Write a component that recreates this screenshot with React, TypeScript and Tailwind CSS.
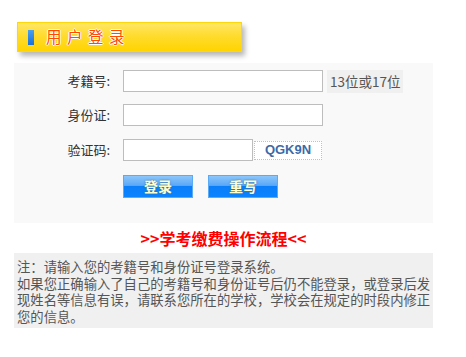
import React from "react";

const cjk = { fontFamily: '"Noto Sans CJK SC", "Liberation Sans", sans-serif' };

function Btn({ label }: { label: string }) {
  return (
    <button
      className="w-[70px] h-[23px] border border-[#5aaaf5] flex items-center justify-center text-[14px] font-bold text-[#ffffc8] bg-[linear-gradient(to_bottom,#8cc6fb_0%,#5aa8f8_45%,#0a7ef8_50%,#0a84ff_100%)] [text-shadow:0_0_2px_#3a6aa0]"
      style={cjk}
    >
      {label}
    </button>
  );
}

export default function App() {
  return (
    <div className="w-[466px] h-[357px] bg-white text-[13px] text-[#333] relative" style={cjk}>
      <div className="pt-[22px] pl-[17px]">
        <div className="w-[225px] h-[30px] border border-[#ffd60a] bg-[linear-gradient(to_bottom,#ffe667_0%,#ffdc2e_45%,#ffd400_100%)] shadow-[3px_4px_5px_rgba(0,0,0,0.28)] flex items-center">
          <div className="ml-[10px] w-[6px] h-[15px] bg-[linear-gradient(to_bottom,#4aa0f0,#1a70d8)]" />
          <span className="ml-[12px] text-[15.5px] tracking-[5.5px] text-[#ff4a00] leading-none [text-shadow:1px_0_0_#fff,-1px_0_0_#fff,0_1px_0_#fff,0_-1px_0_#fff]">
            用户登录
          </span>
        </div>
      </div>

      <div className="ml-[14px] mt-[11px] w-[419px] h-[160px] bg-[#f9f9f9] pt-[7px]">
        <div className="flex items-center h-[22px]">
          <div className="w-[96px] text-right">考籍号:</div>
          <input className="ml-[13px] w-[200px] h-[22px] border border-[#bdbdbd] bg-white outline-none" />
          <div className="ml-[4px] h-[23px] px-[3px] bg-[#f0f0f0] text-[#555] flex items-center text-[13.5px]">13位或17位</div>
        </div>
        <div className="flex items-center h-[22px] mt-[12px]">
          <div className="w-[96px] text-right">身份证:</div>
          <input className="ml-[13px] w-[200px] h-[22px] border border-[#bdbdbd] bg-white outline-none" />
        </div>
        <div className="flex items-center h-[22px] mt-[13px]">
          <div className="w-[96px] text-right">验证码:</div>
          <input className="ml-[13px] w-[130px] h-[22px] border border-[#bdbdbd] bg-white outline-none" />
          <div
            className="ml-[1px] w-[68px] h-[19px] border border-dotted border-[#a8c8e0] bg-white flex items-center justify-center text-[13px] font-bold text-[#3c6aa8]"
            style={{ fontFamily: '"Liberation Sans", Arial, sans-serif' }}
          >
            QGK9N
          </div>
        </div>
        <div className="flex items-center mt-[14px] ml-[109px] gap-[15px]">
          <Btn label="登录" />
          <Btn label="重写" />
        </div>
      </div>

      <div className="w-[419px] ml-[14px] h-[30px] flex items-center justify-center text-[16px] font-bold text-[#ff0000] pb-[1px]">
        &gt;&gt;学考缴费操作流程&lt;&lt;
      </div>

      <div className="ml-[14px] w-[419px] h-[75px] bg-[#f0f0f0] pl-[3px] pt-[6px] text-[13.33px] leading-[16.5px] text-[#555]">
        <div>注：请输入您的考籍号和身份证号登录系统。</div>
        <div>
          如果您正确输入了自己的考籍号和身份证号后仍不能登录，或登录后发现姓名等信息有误，请联系您所在的学校，学校会在规定的时段内修正您的信息。
        </div>
      </div>
    </div>
  );
}
